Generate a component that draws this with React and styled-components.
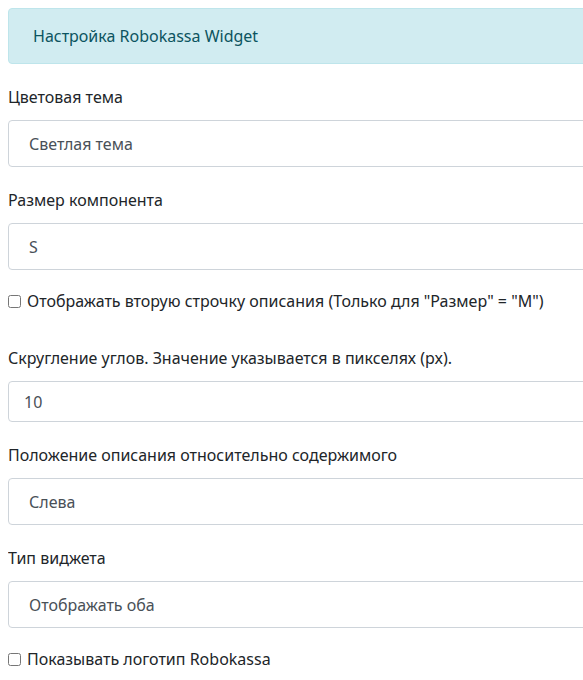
import React from 'react'
import styled, { createGlobalStyle } from 'styled-components'

const GlobalStyle = createGlobalStyle`
  html {
    overflow: hidden;
  }
  body {
    margin: 8px 0 8px 8px;
    font-family: 'Noto Sans', 'Open Sans', sans-serif;
    font-size: 16px;
    color: #212529;
    background: #fff;
  }
`

const Page = styled.div`
  width: 640px;
`

const Alert = styled.div`
  box-sizing: border-box;
  height: 56px;
  display: flex;
  align-items: center;
  padding: 0 24px;
  background-color: #d1ecf1;
  border: 1px solid #bee5eb;
  border-radius: 4px;
  color: #0c5460;
  margin-bottom: 21px;
`

const Group = styled.div`
  margin-bottom: ${p => (p.$tight ? '19px' : '21px')};
`

const Label = styled.label`
  display: block;
  line-height: 24px;
  margin-bottom: 11px;
`

const Select = styled.div`
  box-sizing: border-box;
  height: ${p => (p.$short ? '41px' : '47px')};
  display: flex;
  align-items: center;
  padding: 0 ${p => (p.$short ? '15px' : '20px')};
  border: 1px solid #ced4da;
  border-radius: 4px;
  color: #495057;
`

const CheckRow = styled.label`
  display: flex;
  align-items: center;
  gap: 6px;
  line-height: 24px;
  margin-bottom: 33px;
  input {
    margin: 0;
    width: 13px;
    height: 13px;
  }
`

const App = () => (
  <Page>
    <GlobalStyle />
    <Alert>Настройка Robokassa Widget</Alert>
    <Group>
      <Label>Цветовая тема</Label>
      <Select>Светлая тема</Select>
    </Group>
    <Group $tight>
      <Label>Размер компонента</Label>
      <Select>S</Select>
    </Group>
    <CheckRow>
      <input type="checkbox" />
      Отображать вторую строчку описания (Только для "Размер" = "M")
    </CheckRow>
    <Group>
      <Label>Скругление углов. Значение указывается в пикселях (px).</Label>
      <Select $short>10</Select>
    </Group>
    <Group>
      <Label>Положение описания относительно содержимого</Label>
      <Select>Слева</Select>
    </Group>
    <Group $tight>
      <Label>Тип виджета</Label>
      <Select>Отображать оба</Select>
    </Group>
    <CheckRow>
      <input type="checkbox" />
      Показывать логотип Robokassa
    </CheckRow>
  </Page>
)

export default App
